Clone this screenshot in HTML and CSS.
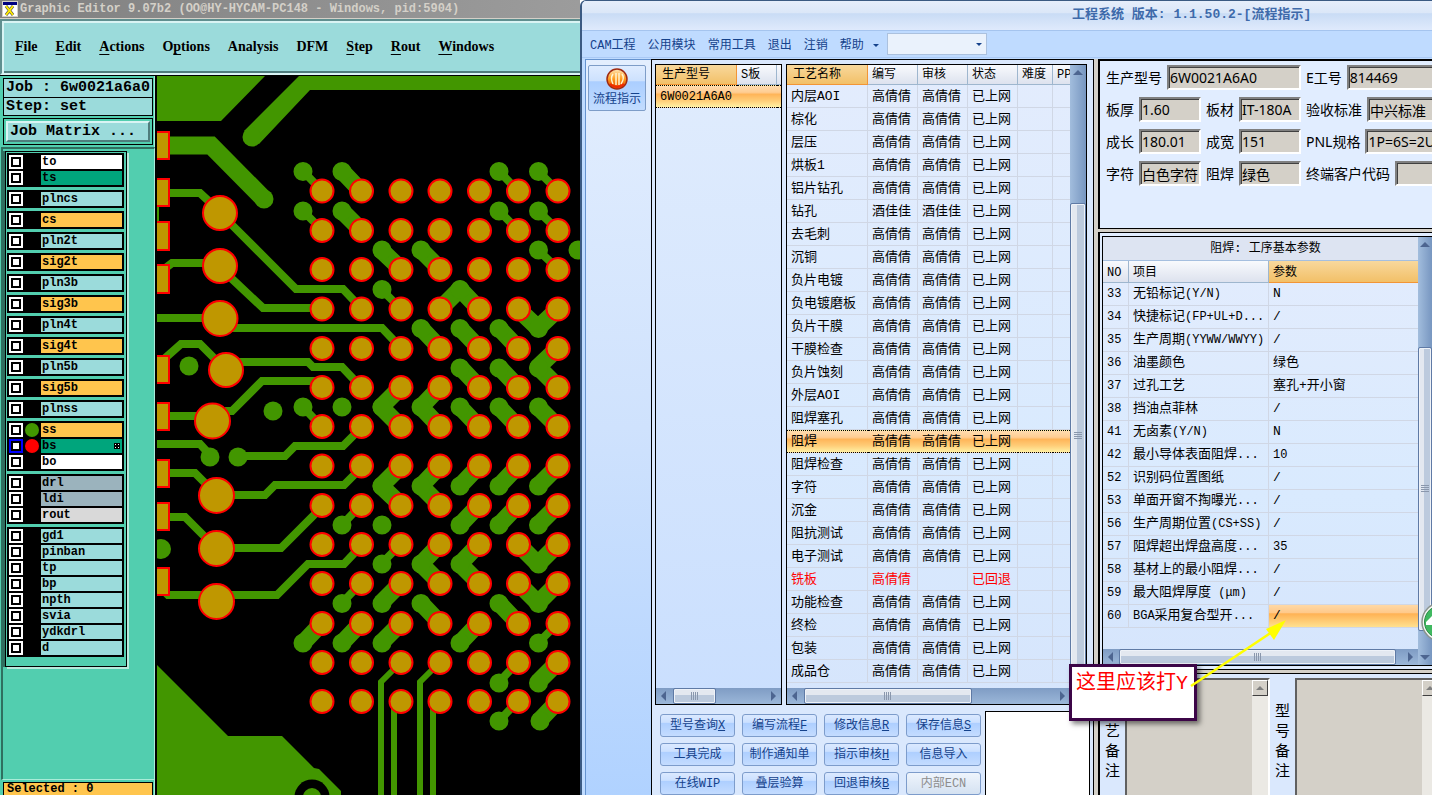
FILE: index.html
```
<!DOCTYPE html>
<html lang="zh-CN">
<head>
    <meta charset="UTF-8">
    <title>工程系统 - 流程指示</title>
    <meta name="viewport" content="width=device-width, initial-scale=1.0">
    <link rel="stylesheet" href="styles.css">
</head>
<body>
    <div class="desktop">
        <!-- Graphic editor -->
        <section class="editor">
            <div class="editor-title">
                <svg class="x-icon" viewBox="0 0 16 16" width="16" height="16">
                    <rect width="16" height="16" fill="#d4d0c8"/>
                    <rect x="1" y="1" width="14" height="3" fill="#000080"/>
                    <rect x="1" y="4" width="14" height="11" fill="#fff"/>
                    <path d="M4 5l7 9M11 5l-7 9" stroke="#555" stroke-width="3"/>
                    <path d="M4 5l7 9M11 5l-7 9" stroke="#ffea00" stroke-width="2"/>
                </svg>
                <span>Graphic Editor 9.07b2 (OO@HY-HYCAM-PC148 - Windows, pid:5904)</span>
            </div>
            <nav class="editor-menu">
                <button><u>F</u>ile</button>
                <button><u>E</u>dit</button>
                <button><u>A</u>ctions</button>
                <button>O<u>p</u>tions</button>
                <button>Analysis</button>
                <button>DFM</button>
                <button><u>S</u>tep</button>
                <button><u>R</u>out</button>
                <button><u>W</u>indows</button>
            </nav>
            <div class="editor-body">
                <div class="toolbox">
                    <div class="job-info">
                        <div>Job : 6w0021a6a0</div>
                        <div>Step: set</div>
                    </div>
                    <div class="matrix"><button>Job Matrix ...</button></div>
                    <div class="layer-panel">
                        <div class="layer-list">
                            <div class="group">
                                <label class="layer white"><input type="checkbox"><i></i><span>to</span></label>
                                <label class="layer green"><input type="checkbox"><i></i><span>ts</span></label>
                            </div>
                            <div class="group"><label class="layer"><input type="checkbox"><i></i><span>plncs</span></label></div>
                            <div class="group"><label class="layer orange"><input type="checkbox"><i></i><span>cs</span></label></div>
                            <div class="group"><label class="layer"><input type="checkbox"><i></i><span>pln2t</span></label></div>
                            <div class="group"><label class="layer orange"><input type="checkbox"><i></i><span>sig2t</span></label></div>
                            <div class="group"><label class="layer"><input type="checkbox"><i></i><span>pln3b</span></label></div>
                            <div class="group"><label class="layer orange"><input type="checkbox"><i></i><span>sig3b</span></label></div>
                            <div class="group"><label class="layer"><input type="checkbox"><i></i><span>pln4t</span></label></div>
                            <div class="group"><label class="layer orange"><input type="checkbox"><i></i><span>sig4t</span></label></div>
                            <div class="group"><label class="layer"><input type="checkbox"><i></i><span>pln5b</span></label></div>
                            <div class="group"><label class="layer orange"><input type="checkbox"><i></i><span>sig5b</span></label></div>
                            <div class="group"><label class="layer"><input type="checkbox"><i></i><span>plnss</span></label></div>
                            <div class="group">
                                <label class="layer orange"><input type="checkbox"><i class="dot-green"></i><span>ss</span></label>
                                <label class="layer green"><input type="checkbox" class="active-layer"><i class="dot-red"></i><span>bs
                                    <svg width="6" height="6" viewBox="0 0 6 6"><path fill="#000" d="M0 0h6v6H0z"/><path fill="#fff" d="M1 1h1v1H1zM4 1h1v1H4zM1 4h1v1H1zM4 4h1v1H4z"/></svg>
                                </span></label>
                                <label class="layer white"><input type="checkbox"><i></i><span>bo</span></label>
                            </div>
                            <div class="group">
                                <label class="layer steel"><input type="checkbox"><i></i><span>drl</span></label>
                                <label class="layer steel"><input type="checkbox"><i></i><span>ldi</span></label>
                                <label class="layer grey"><input type="checkbox"><i></i><span>rout</span></label>
                            </div>
                            <div class="group">
                                <label class="layer"><input type="checkbox"><i></i><span>gd1</span></label>
                                <label class="layer"><input type="checkbox"><i></i><span>pinban</span></label>
                                <label class="layer"><input type="checkbox"><i></i><span>tp</span></label>
                                <label class="layer"><input type="checkbox"><i></i><span>bp</span></label>
                                <label class="layer"><input type="checkbox"><i></i><span>npth</span></label>
                                <label class="layer"><input type="checkbox"><i></i><span>svia</span></label>
                                <label class="layer"><input type="checkbox"><i></i><span>ydkdrl</span></label>
                                <label class="layer"><input type="checkbox"><i></i><span>d</span></label>
                            </div>
                        </div>
                    </div>
                    <div class="selected">Selected : 0</div>
                </div>

                <svg class="board" viewBox="157 76 423 719" preserveAspectRatio="xMinYMin slice">
                    <defs>
                        <g id="row">
                            <circle cx="322" r="11.5"/><circle cx="361.5" r="11.5"/><circle cx="401" r="11.5"/>
                            <circle cx="440" r="11.5"/><circle cx="479.5" r="11.5"/><circle cx="518.5" r="11.5"/>
                            <circle cx="558" r="11.5"/>
                        </g>
                    </defs>
                    <!-- copper areas -->
                    <g fill="#429600">
                        <path d="M157 76H265L221 121H157zM299 76H580V90H310L259 144L244 131z"/>
                        <circle cx="252" cy="137" r="9.5"/>
                        <path d="M157 665L228 736H282L314 768L319 769L341 791V795H157z"/>
                        <path d="M157 207h2v14h-2z"/>
                        <circle cx="312" cy="797" r="17.5" fill="#000"/>
                        <circle cx="312" cy="797" r="9"/>
                        <circle cx="264" cy="199" r="9.5"/>
                        <circle cx="189" cy="366" r="9.5"/>
                        <circle cx="273" cy="411" r="9.5"/>
                        <circle cx="210" cy="457" r="9.5"/>
                        <circle cx="238" cy="457" r="9.5"/>
                        <circle cx="161" cy="549" r="10"/>
                    </g>
                    <!-- traces -->
                    <g fill="none" stroke="#429600" stroke-width="8">
                        <path d="M157 145.500H211L264 199" stroke-width="18"/>
                        <path d="M169 193H200L214 206M230 223L296 289H343L361 308"/>
                        <path d="M163 270L172 263H213M230 277L263 308H322"/>
                        <path d="M157 318H210M230 328H382L401 348"/>
                        <path d="M163 360L181 344H200L214 358M235 362H308L313 367H342L361 387"/>
                        <path d="M169 416H205M225 411H232L262 381H322"/>
                        <path d="M157 444H200L210 455M238 456H285L295 446H343L361 428"/>
                        <path d="M169 473H195L208 486M230 495H265L275 485H344L361 468"/>
                        <path d="M169 517H185L207 539M230 548H281L322 507"/>
                        <path d="M162 589L168 595H277L308 564H344L361 546"/>
                        <path d="M401 662L381 682V795M394 702V795M440 662L420 682V795M433 702V795" stroke-width="6"/>
                    </g>
                    <!-- narrow dog bones -->
                    <g fill="none" stroke="#429600" stroke-width="8">
                        <path d="M303 171L322 191M499 171L518 191M538 171L558 191M303 211L322 230M499 211L518 230M538 211L558 230M538 250L558 269M381 289L401 309M303 407L322 427M342 525L361 505M381 564L401 544M342 603L361 583M538 643L558 623M499 682L518 662M499 721L518 701"/>
                    </g>
                    <!-- wide dog bones -->
                    <g fill="none" stroke="#429600" stroke-width="17" stroke-linejoin="round">
                        <path d="M342 171L361 191M342 211L361 230M381 250L401 269M421 250L440 269M440 309L460 289L479 309"/>
                        <path d="M421 328L440 348M460 328L479 348M499 328L518 348M518 309L538 328L558 309"/>
                        <path d="M460 367L479 387M499 367L518 387M558 348L538 367L558 387"/>
                        <path d="M401 387L381 407L401 427M440 387L421 407L440 427M460 407L479 427M499 407L518 427M538 407L558 427"/>
                        <path d="M401 466L381 486L401 505M440 466L421 486L440 505M460 486L479 466M499 486L518 466M538 486L558 466"/>
                        <path d="M460 525L479 505M499 525L518 505M538 525L558 505"/>
                        <path d="M440 544L421 564L440 583M479 544L460 564L479 583M518 544L538 564L558 544"/>
                        <path d="M381 603L401 583M421 603L440 623M499 603L518 623M518 583L538 603L558 583"/>
                        <path d="M303 643L322 623M342 643L361 623M381 643L401 623M460 643L479 623M538 682L558 662M539 721L558 701"/>
                    </g>
                    <!-- vias, zero length round caps -->
                    <g fill="none" stroke="#429600" stroke-width="19" stroke-linecap="round">
                        <path d="M303 171.500h0M342 171.500h0M499 171.500h0M538.500 171.500h0M303 211h0M342 211h0M499 211h0M538.500 211h0"/>
                        <path d="M382 250h0M421 250h0M538.500 250h0M578 250h0M382 289.500h0M460 289.500h0"/>
                        <path d="M421 328.500h0M460 328.500h0M499 328.500h0M538.500 328.500h0M460 368h0M499 368h0M538.500 368h0"/>
                        <path d="M303 407h0M342 407h0M382 407h0M421 407h0M460 407h0M499 407h0M538.500 407h0"/>
                        <path d="M382 486h0M421 486h0M460 486h0M499 486h0M538.500 486h0M342 525h0M382 525h0M460 525h0M499 525h0M538.500 525h0"/>
                        <path d="M382 564h0M421 564h0M460 564h0M538.500 564h0M342 603.500h0M382 603.500h0M421 603.500h0M499 603.500h0M538.500 603.500h0"/>
                        <path d="M303 643h0M342 643h0M382 643h0M460 643h0M538.500 643h0M499 683h0M538.500 683h0M499 721h0M540 721h0"/>
                    </g>
                    <!-- solder mask openings -->
                    <g fill="#bf9700" stroke="#f00" stroke-width="2">
                        <path d="M150 132h19v27h-19zM150 179h19v27h-19zM150 222h19v28h-19zM150 265h19v28h-19zM150 356h19v27h-19zM150 403h19v27h-19zM150 460h19v27h-19zM150 503h19v27h-19zM150 568h19v27h-19z"/>
                        <circle cx="220" cy="213" r="17"/><circle cx="220" cy="266" r="17"/><circle cx="220" cy="318.500" r="17.500"/>
                        <circle cx="226" cy="370" r="17"/><circle cx="212.500" cy="421" r="17.500"/><circle cx="216.500" cy="495.500" r="17.500"/>
                        <circle cx="216.500" cy="548.500" r="17.500"/><circle cx="216.500" cy="601.500" r="17.500"/>
                        <use href="#row" y="191"/><use href="#row" y="230.500"/><use href="#row" y="269.500"/><use href="#row" y="309"/>
                        <use href="#row" y="348.500"/><use href="#row" y="387.500"/><use href="#row" y="426.500"/><use href="#row" y="466"/>
                        <use href="#row" y="505.500"/><use href="#row" y="544.500"/><use href="#row" y="583.500"/><use href="#row" y="623.500"/>
                        <use href="#row" y="662.500"/><use href="#row" y="701.500"/>
                    </g>
                </svg>
            </div>
        </section>

        <!-- Engineering system -->
        <section class="app">
            <header class="app-title">工程系统 版本: 1.1.50.2-[流程指示]</header>
            <nav class="app-menu">
                <button>CAM工程</button>
                <button>公用模块</button>
                <button>常用工具</button>
                <button>退出</button>
                <button>注销</button>
                <button>帮助</button>
                <span class="caret"></span>
                <span class="combo"><select aria-label="快速选择"><option></option></select><span class="caret"></span></span>
            </nav>
            <div class="work">
                <aside class="side">
                    <button class="side-btn">
                        <svg width="22" height="22" viewBox="0 0 22 22">
                            <defs>
                                <linearGradient id="orb" x1="0" y1="0" x2="0" y2="1">
                                    <stop offset="0" stop-color="#ffe9b8"/><stop offset=".5" stop-color="#ff9a1a"/><stop offset="1" stop-color="#e03c00"/>
                                </linearGradient>
                            </defs>
                            <circle cx="11" cy="11" r="10" fill="url(#orb)" stroke="#a02a10" stroke-width="1.5"/>
                            <path d="M7 6q-3 4 0 10M10 5v12M13 5v12M16 6q3 4-1 10" fill="none" stroke="#fff3d0" stroke-width="1.5"/>
                            <path d="M4 16q7 6 14 0" fill="none" stroke="#f02800" stroke-width="2"/>
                        </svg>
                        流程指示
                    </button>
                </aside>

                <main class="main">
                    <div class="grids">
                        <div class="grid grid-model">
                            <table>
                                <thead><tr><th class="on">生产型号</th><th>S板</th><th></th></tr></thead>
                                <tbody><tr class="sel"><td>6W0021A6A0</td><td></td><td></td></tr></tbody>
                            </table>
                            <div class="hbar"><i class="left"></i><b class="grip"></b><i class="right"></i></div>
                        </div>
                        <div class="grid grid-flow">
                            <div class="flow-rows">
                                <table>
                                    <thead><tr><th class="on">工艺名称</th><th>编写</th><th>审核</th><th>状态</th><th>难度</th><th>PP</th></tr></thead>
                                    <tbody>
                                        <tr><td>内层AOI</td><td>高倩倩</td><td>高倩倩</td><td>已上网</td><td></td><td></td></tr>
                                        <tr><td>棕化</td><td>高倩倩</td><td>高倩倩</td><td>已上网</td><td></td><td></td></tr>
                                        <tr><td>层压</td><td>高倩倩</td><td>高倩倩</td><td>已上网</td><td></td><td></td></tr>
                                        <tr><td>烘板1</td><td>高倩倩</td><td>高倩倩</td><td>已上网</td><td></td><td></td></tr>
                                        <tr><td>铝片钻孔</td><td>高倩倩</td><td>高倩倩</td><td>已上网</td><td></td><td></td></tr>
                                        <tr><td>钻孔</td><td>酒佳佳</td><td>酒佳佳</td><td>已上网</td><td></td><td></td></tr>
                                        <tr><td>去毛刺</td><td>高倩倩</td><td>高倩倩</td><td>已上网</td><td></td><td></td></tr>
                                        <tr><td>沉铜</td><td>高倩倩</td><td>高倩倩</td><td>已上网</td><td></td><td></td></tr>
                                        <tr><td>负片电镀</td><td>高倩倩</td><td>高倩倩</td><td>已上网</td><td></td><td></td></tr>
                                        <tr><td>负电镀磨板</td><td>高倩倩</td><td>高倩倩</td><td>已上网</td><td></td><td></td></tr>
                                        <tr><td>负片干膜</td><td>高倩倩</td><td>高倩倩</td><td>已上网</td><td></td><td></td></tr>
                                        <tr><td>干膜检查</td><td>高倩倩</td><td>高倩倩</td><td>已上网</td><td></td><td></td></tr>
                                        <tr><td>负片蚀刻</td><td>高倩倩</td><td>高倩倩</td><td>已上网</td><td></td><td></td></tr>
                                        <tr><td>外层AOI</td><td>高倩倩</td><td>高倩倩</td><td>已上网</td><td></td><td></td></tr>
                                        <tr><td>阻焊塞孔</td><td>高倩倩</td><td>高倩倩</td><td>已上网</td><td></td><td></td></tr>
                                        <tr class="sel"><td>阻焊</td><td>高倩倩</td><td>高倩倩</td><td>已上网</td><td></td><td></td></tr>
                                        <tr><td>阻焊检查</td><td>高倩倩</td><td>高倩倩</td><td>已上网</td><td></td><td></td></tr>
                                        <tr><td>字符</td><td>高倩倩</td><td>高倩倩</td><td>已上网</td><td></td><td></td></tr>
                                        <tr><td>沉金</td><td>高倩倩</td><td>高倩倩</td><td>已上网</td><td></td><td></td></tr>
                                        <tr><td>阻抗测试</td><td>高倩倩</td><td>高倩倩</td><td>已上网</td><td></td><td></td></tr>
                                        <tr><td>电子测试</td><td>高倩倩</td><td>高倩倩</td><td>已上网</td><td></td><td></td></tr>
                                        <tr class="back"><td>铣板</td><td>高倩倩</td><td></td><td>已回退</td><td></td><td></td></tr>
                                        <tr><td>功能检查</td><td>高倩倩</td><td>高倩倩</td><td>已上网</td><td></td><td></td></tr>
                                        <tr><td>终检</td><td>高倩倩</td><td>高倩倩</td><td>已上网</td><td></td><td></td></tr>
                                        <tr><td>包装</td><td>高倩倩</td><td>高倩倩</td><td>已上网</td><td></td><td></td></tr>
                                        <tr><td>成品仓</td><td>高倩倩</td><td>高倩倩</td><td>已上网</td><td></td><td></td></tr>
                                    </tbody>
                                </table>
                                <div class="vbar"><i class="up"></i><b class="grip"></b><i class="down"></i></div>
                            </div>
                            <div class="hbar"><i class="left"></i><b class="grip"></b><i class="right"></i></div>
                        </div>
                    </div>
                    <div class="actions">
                        <div class="buttons">
                            <button>型号查询<u>X</u></button>
                            <button>编写流程<u>F</u></button>
                            <button>修改信息<u>R</u></button>
                            <button>保存信息<u>S</u></button>
                            <button>工具完成</button>
                            <button>制作通知单</button>
                            <button>指示审核<u>H</u></button>
                            <button>信息导入</button>
                            <button>在线WIP</button>
                            <button>叠层验算</button>
                            <button>回退审核<u>B</u></button>
                            <button disabled>内部ECN</button>
                        </div>
                        <div class="preview"></div>
                    </div>
                </main>

                <div class="detail">
                    <form class="pane info">
                        <div class="line">
                            <label for="model">生产型号</label><input id="model" class="wide" value="6W0021A6A0" readonly>
                            <label for="eno">E工号</label><input id="eno" class="rest" value="814469" readonly>
                        </div>
                        <div class="line">
                            <label for="thick">板厚</label><input id="thick" value="1.60" readonly>
                            <label for="mat">板材</label><input id="mat" value="IT-180A" readonly>
                            <label for="std">验收标准</label><input id="std" class="rest" value="中兴标准" readonly>
                        </div>
                        <div class="line">
                            <label for="len">成长</label><input id="len" value="180.01" readonly>
                            <label for="wid">成宽</label><input id="wid" value="151" readonly>
                            <label for="pnl">PNL规格</label><input id="pnl" class="rest" value="1P=6S=2U" readonly>
                        </div>
                        <div class="line">
                            <label for="chr">字符</label><input id="chr" value="白色字符" readonly>
                            <label for="mask">阻焊</label><input id="mask" value="绿色" readonly>
                            <label for="cust">终端客户代码</label><input id="cust" class="rest" readonly>
                        </div>
                    </form>

                    <div class="pane params">
                        <div class="grid">
                            <div class="param-left">
                                <table>
                                    <caption>阻焊: 工序基本参数</caption>
                                    <thead><tr><th>NO</th><th>项目</th><th class="on">参数</th></tr></thead>
                                    <tbody>
                                        <tr><td>33</td><td>无铅标记<span class="en">(Y/N)</span></td><td>N</td></tr>
                                        <tr><td>34</td><td>快捷标记<span class="en">(FP+UL+D...</span></td><td>/</td></tr>
                                        <tr><td>35</td><td>生产周期<span class="en">(YYWW/WWYY)</span></td><td>/</td></tr>
                                        <tr><td>36</td><td>油墨颜色</td><td>绿色</td></tr>
                                        <tr><td>37</td><td>过孔工艺</td><td>塞孔+开小窗</td></tr>
                                        <tr><td>38</td><td>挡油点菲林</td><td>/</td></tr>
                                        <tr><td>41</td><td>无卤素<span class="en">(Y/N)</span></td><td>N</td></tr>
                                        <tr><td>42</td><td>最小导体表面阻焊<span class="en">...</span></td><td><span class="en">10</span></td></tr>
                                        <tr><td>52</td><td>识别码位置图纸</td><td>/</td></tr>
                                        <tr><td>53</td><td>单面开窗不掏曝光<span class="en">...</span></td><td>/</td></tr>
                                        <tr><td>56</td><td>生产周期位置<span class="en">(CS+SS)</span></td><td>/</td></tr>
                                        <tr><td>57</td><td>阻焊超出焊盘高度<span class="en">...</span></td><td><span class="en">35</span></td></tr>
                                        <tr><td>58</td><td>基材上的最小阻焊<span class="en">...</span></td><td>/</td></tr>
                                        <tr><td>59</td><td>最大阻焊厚度<span class="en"> (μm)</span></td><td>/</td></tr>
                                        <tr><td>60</td><td><span class="en">BGA</span>采用复合型开<span class="en">...</span></td><td class="cur">/</td></tr>
                                    </tbody>
                                </table>
                                <div class="hbar"><i class="left"></i><b class="grip"></b><i class="right"></i></div>
                            </div>
                            <div class="vbar"><i class="up"></i><b class="grip"></b><i class="down"></i></div>
                        </div>
                    </div>

                    <div class="pane notes">
                        <label for="craft">工艺备注</label>
                        <div class="memo"><textarea id="craft" readonly></textarea><div class="oldbar"><button type="button" aria-label="上"><i class="up"></i></button></div></div>
                        <label for="type">型号备注</label>
                        <div class="memo"><textarea id="type" readonly></textarea><div class="oldbar"><button type="button" aria-label="上"><i class="up"></i></button></div></div>
                    </div>
                </div>
            </div>

            <!-- annotation -->
            <div class="tip">这里应该打Y</div>
            <svg class="arrow" width="100" height="72" viewBox="0 0 100 72">
                <path d="M3 68L84 14" stroke="#ff0" stroke-width="2.500" fill="none"/>
                <path d="M98 2L78 11L86 22z" fill="#ff0"/>
            </svg>
            <button class="ball" aria-label="助手">
                <svg width="40" height="40" viewBox="0 0 40 40">
                    <circle cx="20" cy="20" r="19" fill="#f4f6f4" stroke="#8a948e" stroke-width="1.500"/>
                    <circle cx="20" cy="20" r="16.500" fill="#3fb860" stroke="#2c8c48"/>
                    <path d="M5 20l6-6v4h4v5H5z" fill="#fff"/>
                </svg>
            </button>
        </section>
    </div>
</body>
</html>
```
FILE: styles.css
```
* {
    box-sizing: border-box;
}
body {
    margin: 0;
    height: 100vh;
    overflow: hidden;
    font-family: "Liberation Mono", "Noto Sans CJK SC", monospace;
    font-size: 12px;
    color: #000;
}
button, input, select, textarea {
    font: inherit;
    color: inherit;
    margin: 0;
    padding: 0;
}
.desktop {
    display: flex;
    height: 100vh;
}

/* graphic editor */
.editor {
    flex: 0 0 580px;
    display: flex;
    flex-direction: column;
    background: #000;
}
.editor-title {
    display: flex;
    align-items: center;
    gap: 2px;
    height: 19px;
    padding-left: 2px;
    background: linear-gradient(to right, #808080, #9c9c9c);
    border-bottom: 1px solid #d4d0c8;
    color: #d4d0c8;
    font-weight: bold;
    white-space: nowrap;
}
.editor-menu {
    display: flex;
    align-items: center;
    gap: 18px;
    height: 56px;
    padding-left: 13px;
    margin-bottom: 1px;
    background: #9bdbdb;
    border: 2px solid #d9f4f4;
    border-top-color: #5f8f8f;
    border-left-color: #5f8f8f;
    border-right: none;
    box-shadow: inset 2px 2px #d9f4f4, inset 0 -2px #4f7d7d;
}
.editor-menu button {
    border: none;
    background: none;
    font: bold 14px "Liberation Serif", serif;
}
.editor-menu u {
    text-underline-offset: 3px;
}
.editor-body {
    flex: 1;
    display: flex;
    min-height: 0;
}
.toolbox {
    flex: 0 0 157px;
    display: flex;
    flex-direction: column;
    gap: 2px;
    padding: 2px 0 0 1px;
    background: #52ceaf;
    border-right: 2px solid #000;
    box-shadow: inset -1px 0 #a9ecd8;
    font-size: 15px;
}
.job-info {
    margin: 0 2px;
    border: 1px solid #000;
    background: #9bdbdb;
    line-height: 18px;
    padding: 0 2px;
    font-weight: bold;
    white-space: nowrap;
}
.job-info div + div {
    margin: 0 -2px;
    padding: 0 2px;
    line-height: 17px;
    border-top: 1px solid #000;
}
.matrix {
    margin: 0 2px;
    padding: 2px;
    border: 1px solid #000;
}
.matrix button {
    width: 100%;
    height: 21px;
    padding-left: 2px;
    text-align: left;
    line-height: 17px;
    font-weight: bold;
    background: #9bdbdb;
    border: 2px solid;
    border-color: #d9f4f4 #4f7d7d #4f7d7d #d9f4f4;
}
.layer-panel {
    flex: 1;
    min-height: 0;
    padding-top: 2px;
    border-top: 2px solid #2f6f60;
    border-left: 2px solid #2f6f60;
    border-right: 1px solid #a9ecd8;
    border-bottom: 1px solid #a9ecd8;
}
.layer-list {
    display: flex;
    flex-direction: column;
    gap: 3px;
    width: 122px;
    padding: 1px 2px 9px 1px;
    margin-left: 2px;
    border: 1px solid #000;
    box-shadow: 2px 2px #b9e9dc, -2px 0 #2f6f60;
    font-size: 12px;
}
.group {
    display: flex;
    flex-direction: column;
    gap: 2px;
    padding: 2px;
    background: #000;
}
.layer {
    display: flex;
    align-items: center;
    height: 14px;
}
.layer input {
    appearance: none;
    width: 14px;
    height: 14px;
    background: #fff;
    border: 2px solid #fff;
    box-shadow: inset 0 0 0 2px #000;
}
.layer .active-layer {
    border-color: #00f;
}
.layer i {
    width: 14px;
    height: 14px;
    margin: 0 2px;
    border-radius: 50%;
}
.layer .dot-green {
    background: #429600;
}
.layer .dot-red {
    background: #f00;
}
.layer span {
    flex: 1;
    display: flex;
    align-items: center;
    justify-content: space-between;
    height: 14px;
    padding: 0 2px 0 1px;
    background: #9bdbdb;
    font-weight: bold;
    line-height: 14px;
}
.layer.white span {
    background: #fff;
}
.layer.green span {
    background: #00a57c;
}
.layer.orange span {
    background: #ffc54d;
}
.layer.steel span {
    background: #9bb3bd;
}
.layer.grey span {
    background: #d9d9d9;
}
.selected {
    flex: none;
    margin: 0 2px;
    padding-left: 3px;
    border: 1px solid #000;
    border-bottom: none;
    background: #ffc54d;
    font-size: 12px;
    font-weight: bold;
    line-height: 12px;
}
.board {
    flex: 1;
    min-width: 0;
    height: 100%;
    background: #000;
}

/* engineering system window */
.app {
    position: relative;
    flex: 1;
    min-width: 0;
    display: flex;
    flex-direction: column;
    overflow: hidden;
    background: #bfdbff;
    border-top: 1px solid #3b5a82;
    border-left: 2px solid #3b5a82;
    border-top-left-radius: 6px;
}
.app-title {
    height: 30px;
    padding-left: 490px;
    line-height: 27px;
    font-size: 13px;
    font-weight: bold;
    color: #3e6aaa;
    white-space: nowrap;
    background: linear-gradient(#e6eefb, #dbe7f8 40%, #c9dcf5 44%, #dfeafc);
    border-bottom: 1px solid #a5c4ee;
}
.app-menu {
    display: flex;
    align-items: center;
    gap: 12px;
    height: 27px;
    margin-bottom: 1px;
    padding-left: 8px;
    border-bottom: 1px solid #a9c9f5;
    color: #15428b;
}
.app-menu button {
    border: none;
    background: none;
    white-space: nowrap;
}
.caret {
    border: 3px solid transparent;
    border-top-color: #15428b;
    border-bottom: none;
}
.app-menu > .caret {
    margin: 2px -4px 0 -3px;
}
.combo {
    display: flex;
    align-items: center;
    width: 100px;
    height: 22px;
    padding-right: 4px;
    background: #eaf2fc;
    border: 1px solid #abc1de;
}
.combo select {
    flex: 1;
    height: 20px;
    appearance: none;
    border: none;
    background: none;
}
.work {
    flex: 1;
    display: flex;
    min-height: 0;
    padding-left: 3px;
}
.side {
    flex: 0 0 66px;
    padding: 5px 2px;
    border-top: 1px solid #6593cf;
    border-left: 1px solid #6593cf;
    background: linear-gradient(#e3eefe, #cfe2fd 50%, #b0d2ff);
}
.side-btn {
    display: flex;
    flex-direction: column;
    align-items: center;
    gap: 2px;
    width: 58px;
    height: 46px;
    padding-top: 2px;
    border: 1px solid #7e9dc8;
    border-radius: 2px;
    background: linear-gradient(#dfecff, #cde1fd 33%, #abceff 36%, #c2dcff);
    color: #15428b;
    line-height: 17px;
}
.main {
    flex: 0 0 443px;
    display: flex;
    flex-direction: column;
    padding: 4px 6px 0 3px;
    border: 1px solid #000;
    border-bottom: none;
    background: #dae8fd;
}
.grids {
    flex: 1;
    display: flex;
    gap: 4px;
    min-height: 0;
}
.grid {
    border: 1px solid #000;
    background: linear-gradient(#e3ecfd, #d9eafe 60%, #d6e5fc);
    overflow: hidden;
}
.grid-model {
    flex: 0 0 127px;
    display: flex;
    flex-direction: column;
    justify-content: space-between;
    background: linear-gradient(#e0ecfd, #cadffe);
}
.grid-flow {
    flex: 0 0 301px;
    display: flex;
    flex-direction: column;
}
.flow-rows {
    flex: 1;
    display: flex;
    align-items: flex-start;
    min-height: 0;
}
table {
    border-collapse: separate;
    border-spacing: 0;
    table-layout: fixed;
    width: 100%;
    font-size: 13px;
}
th, td {
    padding: 0 0 0 4px;
    text-align: left;
    white-space: nowrap;
    overflow: hidden;
    border-right: 1px solid #d0d7e5;
    border-bottom: 1px solid #d0d7e5;
}
th {
    height: 20px;
    padding-top: 1px;
    font-size: 12px;
    font-weight: normal;
    line-height: 18px;
    background: linear-gradient(#f8fafd, #dde2ee);
    border-color: #9eb6ce;
}
th.on {
    background: linear-gradient(#f8d89c, #f2c068);
    border-color: #f29536;
}
td {
    height: 23px;
    padding-top: 1px;
    line-height: 20px;
}
td:last-child, th:last-child {
    border-right: none;
}
.grid-model th:nth-child(1), .grid-flow th:nth-child(1) {
    width: 81px;
    padding-left: 6px;
}
.grid-model th:nth-child(2) {
    width: 40px;
}
.grid-model td {
    font-size: 12px;
}
.grid-flow th:nth-child(2), .grid-flow th:nth-child(3), .grid-flow th:nth-child(4) {
    width: 50px;
}
.grid-flow th:nth-child(5) {
    width: 35px;
}
.sel td {
    background: linear-gradient(#ffdcaf, #ffcd92 30%, #ffb559 40%, #ffcd78 70%, #fff0a3);
    border-top: 1px dotted #000;
    border-bottom: 1px dotted #000;
    border-right: none;
}
.back td {
    color: #f00;
}

/* scroll bars */
.hbar, .vbar {
    display: flex;
    align-items: center;
    justify-content: space-between;
}
.hbar {
    height: 16px;
    padding: 0 5px;
    background: linear-gradient(#7f9cc4, #9bb7d9);
}
.vbar {
    align-self: stretch;
    flex: 0 0 16px;
    flex-direction: column;
    padding: 5px 0;
    background: linear-gradient(to right, #a2bddd, #7796c0);
}
.grip {
    background-repeat: no-repeat;
    background-position: center;
    border: 1px solid #5f7aa5;
    border-radius: 2px;
    box-shadow: inset 0 0 0 1px #eef2f8;
}
.hbar .grip {
    height: 16px;
    background-image: repeating-linear-gradient(to right, #8a97ac 0 1px, transparent 1px 2px), linear-gradient(#e3e8f0 40%, #bccadd 45%);
    background-size: 8px 8px, 100% 100%;
}
.vbar .grip {
    width: 16px;
    background-image: repeating-linear-gradient(#8a97ac 0 1px, transparent 1px 2px), linear-gradient(to right, #e3e8f0 40%, #bccadd 45%);
    background-size: 8px 8px, 100% 100%;
}
.left, .right, .up, .down {
    border: 5px solid transparent;
}
.left {
    border-right-color: #4d6590;
    border-left: none;
}
.right {
    border-left-color: #4d6590;
    border-right: none;
}
.up {
    border-bottom-color: #4d6590;
    border-top: none;
}
.down {
    border-top-color: #4d6590;
    border-bottom: none;
}
.grid-model .grip {
    width: 43px;
    margin: 0 auto 0 7px;
}
.grid-flow .hbar {
    padding-right: 21px;
}
.grid-flow .hbar .grip {
    width: 168px;
    margin: 0 auto 0 7px;
}
.grid-flow .vbar .grip {
    flex: 0 0 76%;
    margin-top: 128px;
    margin-bottom: auto;
}

/* action buttons */
.actions {
    flex: 0 0 90px;
    display: flex;
    align-items: flex-start;
    gap: 4px;
    margin-right: -3px;
    overflow: hidden;
}
.buttons {
    display: grid;
    grid-template-columns: repeat(4, 75px);
    gap: 6px 7px;
    padding: 9px 0 0 5px;
}
.buttons button {
    height: 23px;
    border: 1px solid #7d9ccb;
    border-radius: 3px;
    background: linear-gradient(#dbe9ff, #cbe0ff 35%, #aecfff 40%, #c4dcff);
    color: #15428b;
    white-space: nowrap;
    line-height: 20px;
}
.buttons button:disabled {
    background: linear-gradient(#eef4fc, #d5e2f2);
    color: #8d8d8d;
}
.preview {
    flex: 1;
    align-self: stretch;
    margin-top: 6px;
    background: #fff;
    border: 1px solid #000;
    border-bottom: none;
}

/* right column */
.detail {
    flex: 1;
    min-width: 0;
    display: flex;
    flex-direction: column;
    gap: 3px;
    padding-left: 4px;
    background: #d4d0c8;
}
.pane {
    border-top: 1px solid #000;
    border-left: 2px solid #000;
    border-bottom: 1px solid #000;
    background: #e1edff;
    overflow: hidden;
}
.info {
    flex: 0 0 170px;
    display: flex;
    flex-direction: column;
    gap: 7px;
    padding: 4px 0 0 6px;
    border-top-width: 2px;
    font: 14px "Noto Sans", "Noto Sans CJK SC", sans-serif;
}
.line {
    display: flex;
    align-items: center;
    gap: 5px;
}
.line label {
    white-space: nowrap;
    line-height: 25px;
}
.line input {
    flex: 0 0 62px;
    width: 62px;
    height: 25px;
    padding-left: 1px;
    background: #d4d0c8;
    border: 2px solid;
    border-color: #808080 #fff #fff #808080;
    box-shadow: inset 1px 1px #404040;
}
.line .wide {
    flex-basis: 134px;
}
.line .rest {
    flex: 1 0 36px;
    border-right: none;
}
.params {
    flex: 1;
    min-height: 0;
    display: flex;
    padding: 3px 0 3px 2px;
}
.params .grid {
    flex: 1;
    display: flex;
    border-right: none;
}
.param-left {
    flex: 1;
    min-width: 0;
    display: flex;
    flex-direction: column;
    justify-content: space-between;
}
caption {
    height: 24px;
    padding-left: 10px;
    line-height: 24px;
    font-size: 12px;
    background: #dde4f2;
    border-bottom: 1px solid #a5bfdf;
}
.params th {
    height: 22px;
    padding-top: 3px;
}
.params td {
    padding-top: 0;
}
.params th:first-child {
    width: 26px;
}
.params th:nth-child(2) {
    width: 140px;
}
.params td:first-child, .en {
    font-size: 12px;
}
.en {
    white-space: pre;
}
.params .vbar {
    flex-basis: 14px;
}
.params .vbar .grip {
    width: 14px;
    flex: 0 0 68%;
    margin-top: 100px;
    margin-bottom: auto;
}
.params .hbar .grip {
    flex: 1;
    margin: 0 12px 0 6px;
}
.cur {
    background: linear-gradient(#ffd9a6, #ffc98a 35%, #ffb254 40%, #ffe08f);
}
.notes {
    flex: 0 0 122px;
    display: flex;
    padding-top: 4px;
    border-bottom: none;
    background: #dae8fd;
}
.notes label {
    flex: 0 0 25px;
    padding: 22px 4px 0 5px;
    font: 15px/20px "Noto Sans CJK SC", sans-serif;
    word-break: break-all;
}
.memo {
    flex: 0 0 145px;
    min-width: 0;
    display: flex;
    border: 2px solid;
    border-color: #606060 #fff transparent #606060;
    border-bottom: none;
}
.memo textarea {
    flex: 1;
    min-width: 0;
    border: none;
    resize: none;
    background: #d4d0c8;
}
.oldbar {
    flex: 0 0 16px;
    background: #ebe9e4;
}
.oldbar button {
    display: flex;
    align-items: center;
    justify-content: center;
    width: 16px;
    height: 16px;
    background: #d4d0c8;
    border: 1px solid;
    border-color: #fff #404040 #404040 #fff;
}
.oldbar .up {
    border-width: 4px;
    border-top: none;
    border-bottom-color: #808080;
}

/* annotation drawn over the window */
.tip {
    position: absolute;
    left: 487px;
    top: 663px;
    width: 128px;
    height: 57px;
    padding: 2px 4px;
    background: #fff;
    border: 3px solid #3c0547;
    box-shadow: 3px 3px 5px rgba(0, 0, 0, 0.5);
    color: #f00;
    font-size: 20px;
    line-height: 30px;
    white-space: nowrap;
}
.arrow {
    position: absolute;
    left: 606px;
    top: 617px;
}
.ball {
    position: absolute;
    right: -29px;
    top: 601px;
    border: none;
    background: none;
}
```
